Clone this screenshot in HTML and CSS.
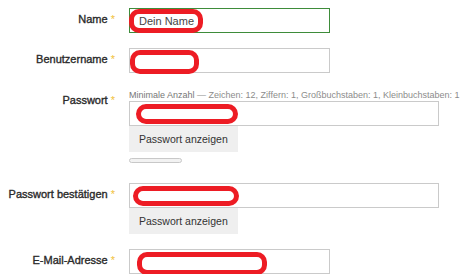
FILE: index.html
```html
<!DOCTYPE html>
<html lang="de">
<head>
<meta charset="utf-8">
<title>Registrierung</title>
<link rel="stylesheet" href="styles.css">
</head>
<body>
<form class="form">
  <div class="row">
    <label class="label">Name <span class="req">*</span></label>
    <div class="field">
      <div class="control">
        <input class="input input-short input-valid" type="text" value="Dein Name">
        <span class="redact redact-name"></span>
      </div>
    </div>
  </div>

  <div class="row row-user">
    <label class="label">Benutzername <span class="req">*</span></label>
    <div class="field">
      <div class="control">
        <input class="input input-short" type="text" value="">
        <span class="redact redact-user"></span>
      </div>
    </div>
  </div>

  <div class="row row-pass">
    <label class="label">Passwort <span class="req">*</span></label>
    <div class="field">
      <div class="hint"><span class="hint-key">Minimale Anzahl</span> — Zeichen: 12, Ziffern: 1, Großbuchstaben: 1, Kleinbuchstaben: 1</div>
      <div class="control">
        <input class="input input-long" type="text" value="">
        <span class="redact redact-pass"></span>
      </div>
      <button class="btn" type="button">Passwort anzeigen</button>
      <div class="meter"></div>
    </div>
  </div>

  <div class="row row-confirm">
    <label class="label">Passwort bestätigen <span class="req">*</span></label>
    <div class="field">
      <div class="control">
        <input class="input input-long" type="text" value="">
        <span class="redact redact-confirm"></span>
      </div>
      <button class="btn" type="button">Passwort anzeigen</button>
    </div>
  </div>

  <div class="row row-mail">
    <label class="label">E-Mail-Adresse <span class="req">*</span></label>
    <div class="field">
      <div class="control">
        <input class="input input-short" type="text" value="">
        <span class="redact redact-mail"></span>
      </div>
    </div>
  </div>
</form>
</body>
</html>
```

FILE: styles.css
```css
html, body {
  margin: 0;
  padding: 0;
  overflow: hidden;
  background: #ffffff;
}

body {
  font-family: "Liberation Sans", Arial, sans-serif;
  color: #2b2b2b;
}

.form {
  padding-top: 8px;
}

.row {
  display: grid;
  grid-template-columns: 115px 1fr;
  column-gap: 14px;
  align-items: start;
}

.row-user { margin-top: 15px; }
.row-pass { margin-top: 16px; }
.row-confirm { margin-top: 20px; }
.row-mail { margin-top: 15px; }

.label {
  display: block;
  text-align: right;
  font-size: 11px;
  line-height: 15px;
  padding-top: 4px;
  color: #2a2a2a;
  -webkit-text-stroke: 0.35px #2a2a2a;
  white-space: nowrap;
}

.req {
  color: #f1bf3a;
  -webkit-text-stroke: 0;
}

.field {
  display: flex;
  flex-direction: column;
  align-items: flex-start;
  min-width: 0;
}

.hint {
  font-size: 9px;
  line-height: 12px;
  color: #8c8c8c;
  white-space: nowrap;
}

.hint-key {
  color: #777777;
}

.control {
  position: relative;
}

.input {
  display: block;
  box-sizing: border-box;
  height: 25px;
  margin: 0;
  padding: 0 9px;
  border: 1px solid #cacaca;
  border-radius: 0;
  background: #ffffff;
  font-family: "Liberation Sans", Arial, sans-serif;
  font-size: 11px;
  color: #444444;
  outline: none;
}

.input-short { width: 201px; }
.input-long { width: 310px; }

.input-valid {
  border-color: #3e8c3a;
}

.btn {
  display: block;
  box-sizing: border-box;
  width: 109px;
  height: 26px;
  margin: 0;
  padding: 0 0 0 10px;
  border: none;
  background: #efefef;
  font-family: "Liberation Sans", Arial, sans-serif;
  font-size: 10.5px;
  color: #333333;
  text-align: left;
}

.meter {
  box-sizing: border-box;
  width: 53px;
  height: 5px;
  margin-top: 6px;
  border: 1px solid #c8c8c8;
  border-radius: 3px;
  background: #f2f2f2;
}

.redact {
  position: absolute;
  box-sizing: border-box;
  border: 5px solid #ed1c24;
  border-radius: 10px;
  pointer-events: none;
}

.redact-name { left: 0; top: 1px; width: 74px; height: 24px; }
.redact-user { left: 1px; top: 2px; width: 69px; height: 24px; }
.redact-pass { left: 7px; top: 3px; width: 102px; height: 20px; }
.redact-confirm { left: 4px; top: 3px; width: 106px; height: 20px; }
.redact-mail { left: 8px; top: 3px; width: 130px; height: 23px; }
```
